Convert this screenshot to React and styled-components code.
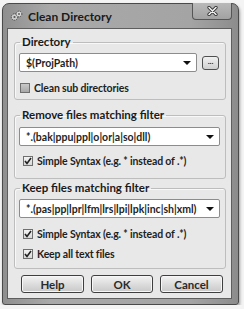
import styled, { createGlobalStyle } from "styled-components";

const Global = createGlobalStyle`
  html, body {
    margin: 0;
    padding: 0;
    background: #f4f4f4;
  }
  body {
    font-family: Lato, "Open Sans", "Liberation Sans", sans-serif;
    color: #1e1e1e;
  }
`;

const Window = styled.div`
  margin: 3px 0 0 2px;
  width: 237px;
  height: 302px;
  box-sizing: border-box;
  display: flex;
  flex-direction: column;
  border: 1px solid #4a4a4a;
  border-radius: 7px 7px 3px 3px;
  background: linear-gradient(90deg, #8f8f8f, #a9a9a9 20%, #a4a4a4 80%, #8c8c8c);
  box-shadow: 1px 2px 3px rgba(0, 0, 0, 0.35);
`;

const TitleBar = styled.div`
  height: 24px;
  display: flex;
  align-items: center;
  padding-left: 7px;
  gap: 5px;
  position: relative;
`;

const Title = styled.span`
  font-size: 12px;
  font-weight: 700;
  color: #1a1a1a;
  margin-top: 1px;
`;

const CloseBtn = styled.div`
  position: absolute;
  top: -1px;
  right: 6px;
  width: 40px;
  height: 17px;
  box-sizing: border-box;
  border: 1px solid #555;
  border-top: none;
  border-radius: 0 0 4px 4px;
  background: linear-gradient(#b9b9b9, #a2a2a2);
  display: flex;
  align-items: center;
  justify-content: center;
`;

const Client = styled.div`
  flex: 1;
  margin: 0 6px 5px 4px;
  border: 1px solid #5e5e5e;
  background: #e8e8e8;
  padding: 6px 5px 5px 6px;
  display: flex;
  flex-direction: column;
`;

const Group = styled.fieldset`
  margin: 0 0 ${(p) => p.$mb}px 0;
  padding: 0 5px ${(p) => p.$pb}px 4px;
  border: 1px solid #bdbdbd;
  border-radius: 3px;
  box-shadow: inset 1px 1px 0 #f8f8f8;
  display: flex;
  flex-direction: column;
  min-width: 0;
`;

const Legend = styled.legend`
  font-size: 11.5px;
  font-weight: 700;
  line-height: 14px;
  padding: 0 2px;
  margin-left: 1px;
  color: #1a1a1a;
`;

const Row = styled.div`
  display: flex;
  align-items: center;
  gap: 5px;
  margin-top: ${(p) => p.$mt}px;
`;

const Combo = styled.div`
  flex: 1;
  height: 19px;
  box-sizing: border-box;
  border: 1px solid #8c8c8c;
  border-radius: 2px;
  background: #fff;
  display: flex;
  align-items: center;
  padding: 0 5px 0 6px;
  font-size: 10.5px;
  font-weight: 700;
  white-space: nowrap;
  overflow: hidden;
`;

const ComboText = styled.span`
  flex: 1;
  overflow: hidden;
`;

const Arrow = styled.span`
  width: 0;
  height: 0;
  border-left: 4px solid transparent;
  border-right: 4px solid transparent;
  border-top: 4px solid #111;
  margin-left: 4px;
`;

const Browse = styled.div`
  width: 17px;
  height: 14px;
  box-sizing: border-box;
  border: 1px solid #4f4f4f;
  border-radius: 3px;
  background: linear-gradient(#f0f0f0, #cfcfcf);
  font-size: 8px;
  font-weight: 700;
  line-height: 8px;
  text-align: center;
  margin-right: 1px;
`;

const CheckRow = styled.label`
  display: flex;
  align-items: center;
  gap: 4px;
  height: 14px;
  margin-top: ${(p) => p.$mt}px;
  padding-left: ${(p) => p.$pl}px;
  font-size: 10.5px;
  letter-spacing: -0.15px;
  font-weight: 700;
  white-space: nowrap;
`;

const Box = styled.span`
  width: 10px;
  height: 10px;
  box-sizing: border-box;
  border: 1px solid #6f6f6f;
  background: ${(p) => (p.$checked ? "linear-gradient(#f4f4f4, #d8d8d8)" : "linear-gradient(#c8c8c8, #a8a8a8)")};
  display: flex;
  align-items: center;
  justify-content: center;
`;

const Buttons = styled.div`
  display: flex;
  gap: 7px;
  padding-left: 7px;
  margin-top: auto;
`;

const Button = styled.div`
  width: ${(p) => p.$w}px;
  height: 18px;
  box-sizing: border-box;
  border: 1px solid #3f3f3f;
  border-radius: 3px;
  background: linear-gradient(#f3f3f3, #dddddd 50%, #c9c9c9);
  box-shadow: inset 0 0 0 1px #f7f7f7;
  font-size: 11.5px;
  font-weight: 700;
  display: flex;
  align-items: center;
  justify-content: center;
  color: #2a2a2a;
`;

const Check = () => (
  <svg width="8" height="8" viewBox="0 0 8 8">
    <path d="M1 4 L3 6.5 L7 1" fill="none" stroke="#222" strokeWidth="1.6" />
  </svg>
);

const GearIcon = () => (
  <svg width="13" height="12" viewBox="0 0 13 12">
    <circle cx="4.5" cy="7" r="3.2" fill="#cfcfcf" stroke="#444" strokeWidth="1" strokeDasharray="1.4 0.8" />
    <circle cx="4.5" cy="7" r="1.1" fill="#555" />
    <circle cx="9" cy="4" r="2.8" fill="#dcdcdc" stroke="#444" strokeWidth="1" strokeDasharray="1.2 0.8" />
    <circle cx="9" cy="4" r="0.9" fill="#555" />
  </svg>
);

const CloseX = () => (
  <svg width="11" height="10" viewBox="0 0 11 10">
    <path d="M2 1.5 L9 8.5 M9 1.5 L2 8.5" stroke="#333" strokeWidth="3.2" strokeLinecap="round" />
    <path d="M2 1.5 L9 8.5 M9 1.5 L2 8.5" stroke="#f2f2f2" strokeWidth="1.6" strokeLinecap="round" />
  </svg>
);

const CheckItem = ({ checked, children, mt, pl = 5 }) => (
  <CheckRow $mt={mt} $pl={pl}>
    <Box $checked={checked}>{checked && <Check />}</Box>
    {children}
  </CheckRow>
);

const App = () => {
  return (
    <>
      <Global />
      <Window>
        <TitleBar>
          <GearIcon />
          <Title>Clean Directory</Title>
          <CloseBtn>
            <CloseX />
          </CloseBtn>
        </TitleBar>
        <Client>
          <Group $pb={4} $mb={8}>
            <Legend>Directory</Legend>
            <Row $mt={4}>
              <Combo>
                <ComboText>$(ProjPath)</ComboText>
                <Arrow />
              </Combo>
              <Browse>...</Browse>
            </Row>
            <CheckItem checked={false} mt={9} pl={1}>
              Clean sub directories
            </CheckItem>
          </Group>

          <Group $pb={10} $mb={2}>
            <Legend>Remove files matching filter</Legend>
            <Row $mt={5}>
              <Combo>
                <ComboText>*.(bak|ppu|ppl|o|or|a|so|dll)</ComboText>
                <Arrow />
              </Combo>
            </Row>
            <CheckItem checked mt={8} pl={4}>
              Simple Syntax (e.g. * instead of .*)
            </CheckItem>
          </Group>

          <Group $pb={7} $mb={0}>
            <Legend>Keep files matching filter</Legend>
            <Row $mt={4}>
              <Combo>
                <ComboText>*.(pas|pp|lpr|lfm|lrs|lpi|lpk|inc|sh|xml)</ComboText>
                <Arrow />
              </Combo>
            </Row>
            <CheckItem checked mt={9} pl={4}>
              Simple Syntax (e.g. * instead of .*)
            </CheckItem>
            <CheckItem checked mt={6} pl={4}>
              Keep all text files
            </CheckItem>
          </Group>

          <Buttons>
            <Button $w={63}>Help</Button>
            <Button $w={62}>OK</Button>
            <Button $w={63}>Cancel</Button>
          </Buttons>
        </Client>
      </Window>
    </>
  );
};

export default App;
